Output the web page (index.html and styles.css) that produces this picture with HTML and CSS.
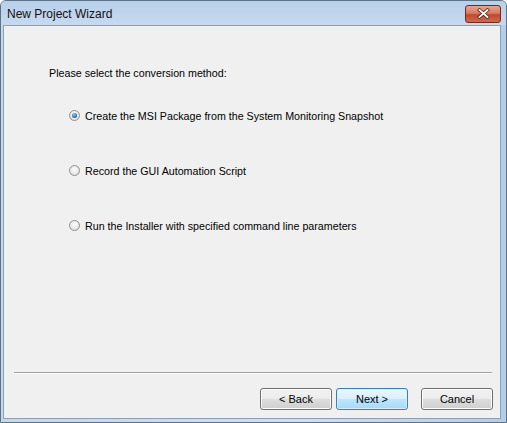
FILE: index.html
```html
<!DOCTYPE html>
<html lang="en">
<head>
    <meta charset="UTF-8">
    <title>New Project Wizard</title>
    <link rel="stylesheet" href="styles.css">
</head>
<body>
    <div class="window">
        <div class="titlebar">
            <span class="title">New Project Wizard</span>
            <button class="close-btn" aria-label="Close">
                <svg width="13" height="11" viewBox="0 0 13 11">
                    <path d="M2.5 2 L10.5 9 M10.5 2 L2.5 9" stroke="#5a2418" stroke-width="3.4" stroke-linecap="square"/>
                    <path d="M2.5 2 L10.5 9 M10.5 2 L2.5 9" stroke="#ffffff" stroke-width="1.8" stroke-linecap="square"/>
                </svg>
            </button>
        </div>
        <div class="client">
            <div class="content">
                <p class="prompt">Please select the conversion method:</p>
                <div class="options">
                    <label class="option">
                        <span class="radio checked"></span>
                        <span>Create the MSI Package from the System Monitoring Snapshot</span>
                    </label>
                    <label class="option">
                        <span class="radio"></span>
                        <span>Record the GUI Automation Script</span>
                    </label>
                    <label class="option">
                        <span class="radio"></span>
                        <span>Run the Installer with specified command line parameters</span>
                    </label>
                </div>
            </div>
            <div class="separator"></div>
            <div class="buttons">
                <button class="btn">&lt; Back</button>
                <button class="btn default">Next &gt;</button>
                <button class="btn cancel">Cancel</button>
            </div>
        </div>
    </div>
</body>
</html>
```

FILE: styles.css
```css
body {
    margin: 0;
    background-color: #ffffff;
    font-family: Tahoma, 'Liberation Sans', sans-serif;
    font-size: 10.7px;
    color: #000000;
}

.window {
    width: 507px;
    height: 423px;
    box-sizing: border-box;
    display: flex;
    flex-direction: column;
    background: linear-gradient(to right, #c4d8ee, #cde0f2 60%, #b4cde8);
    border: 1px solid #5e7288;
    border-radius: 6px 6px 0 0;
    overflow: hidden;
}

.titlebar {
    height: 24px;
    display: flex;
    align-items: center;
    justify-content: space-between;
    padding: 0 5px 0 6px;
    background: linear-gradient(to bottom, #b9d0ea, #c6d9ef);
}

.title {
    font-family: 'Liberation Sans', sans-serif;
    font-size: 12px;
    color: #111111;
    padding-top: 1px;
}

.close-btn {
    width: 36px;
    height: 18px;
    padding: 0;
    display: flex;
    align-items: center;
    justify-content: center;
    margin-top: 1px;
    border: 1px solid #6e2b1e;
    border-radius: 3px;
    background: linear-gradient(to bottom, #e8a493 0%, #d77b64 45%, #c0492c 55%, #d0694e 100%);
}

.client {
    flex: 1;
    display: flex;
    flex-direction: column;
    margin: 0 5px 3px 2px;
    background-color: #f0f0f0;
    border: 1px solid #8da0b6;
}

.content {
    flex: 1;
    padding: 41px 0 0 45px;
}

.prompt {
    margin: 0 0 30px;
}

.options {
    display: flex;
    flex-direction: column;
    gap: 42px;
    padding-left: 20px;
}

.option {
    display: flex;
    align-items: center;
    gap: 5px;
    height: 13px;
}

.radio {
    width: 11px;
    height: 11px;
    box-sizing: border-box;
    border-radius: 50%;
    border: 1px solid #8f8f8f;
    background: radial-gradient(circle at 50% 40%, #ffffff, #d8d8d8);
    display: flex;
    align-items: center;
    justify-content: center;
}

.radio.checked::after {
    content: "";
    width: 5px;
    height: 5px;
    border-radius: 50%;
    background: radial-gradient(circle at 40% 35%, #8fd3f5, #1f5e9a 70%);
}

.separator {
    height: 0;
    margin: 0 8px 0 10px;
    border-top: 1px solid #a0a0a0;
    border-bottom: 1px solid #ffffff;
}

.buttons {
    display: flex;
    justify-content: flex-end;
    gap: 4px;
    padding: 14px 7px 8px;
}

.btn {
    width: 72px;
    height: 22px;
    font-family: Tahoma, 'Liberation Sans', sans-serif;
    font-size: 11px;
    color: #000000;
    border: 1px solid #707070;
    border-radius: 3px;
    background: linear-gradient(to bottom, #f2f2f2 0%, #ebebeb 50%, #dddddd 51%, #cfcfcf 100%);
    box-shadow: inset 0 0 0 1px #fcfcfc;
}

.btn.default {
    border-color: #3c7fb1;
    background: linear-gradient(to bottom, #eaf6fd 0%, #d9f0fc 50%, #bee6fd 51%, #a7d9f5 100%);
    box-shadow: inset 0 0 0 1px #d8efff;
}

.btn.cancel {
    margin-left: 9px;
}
```
